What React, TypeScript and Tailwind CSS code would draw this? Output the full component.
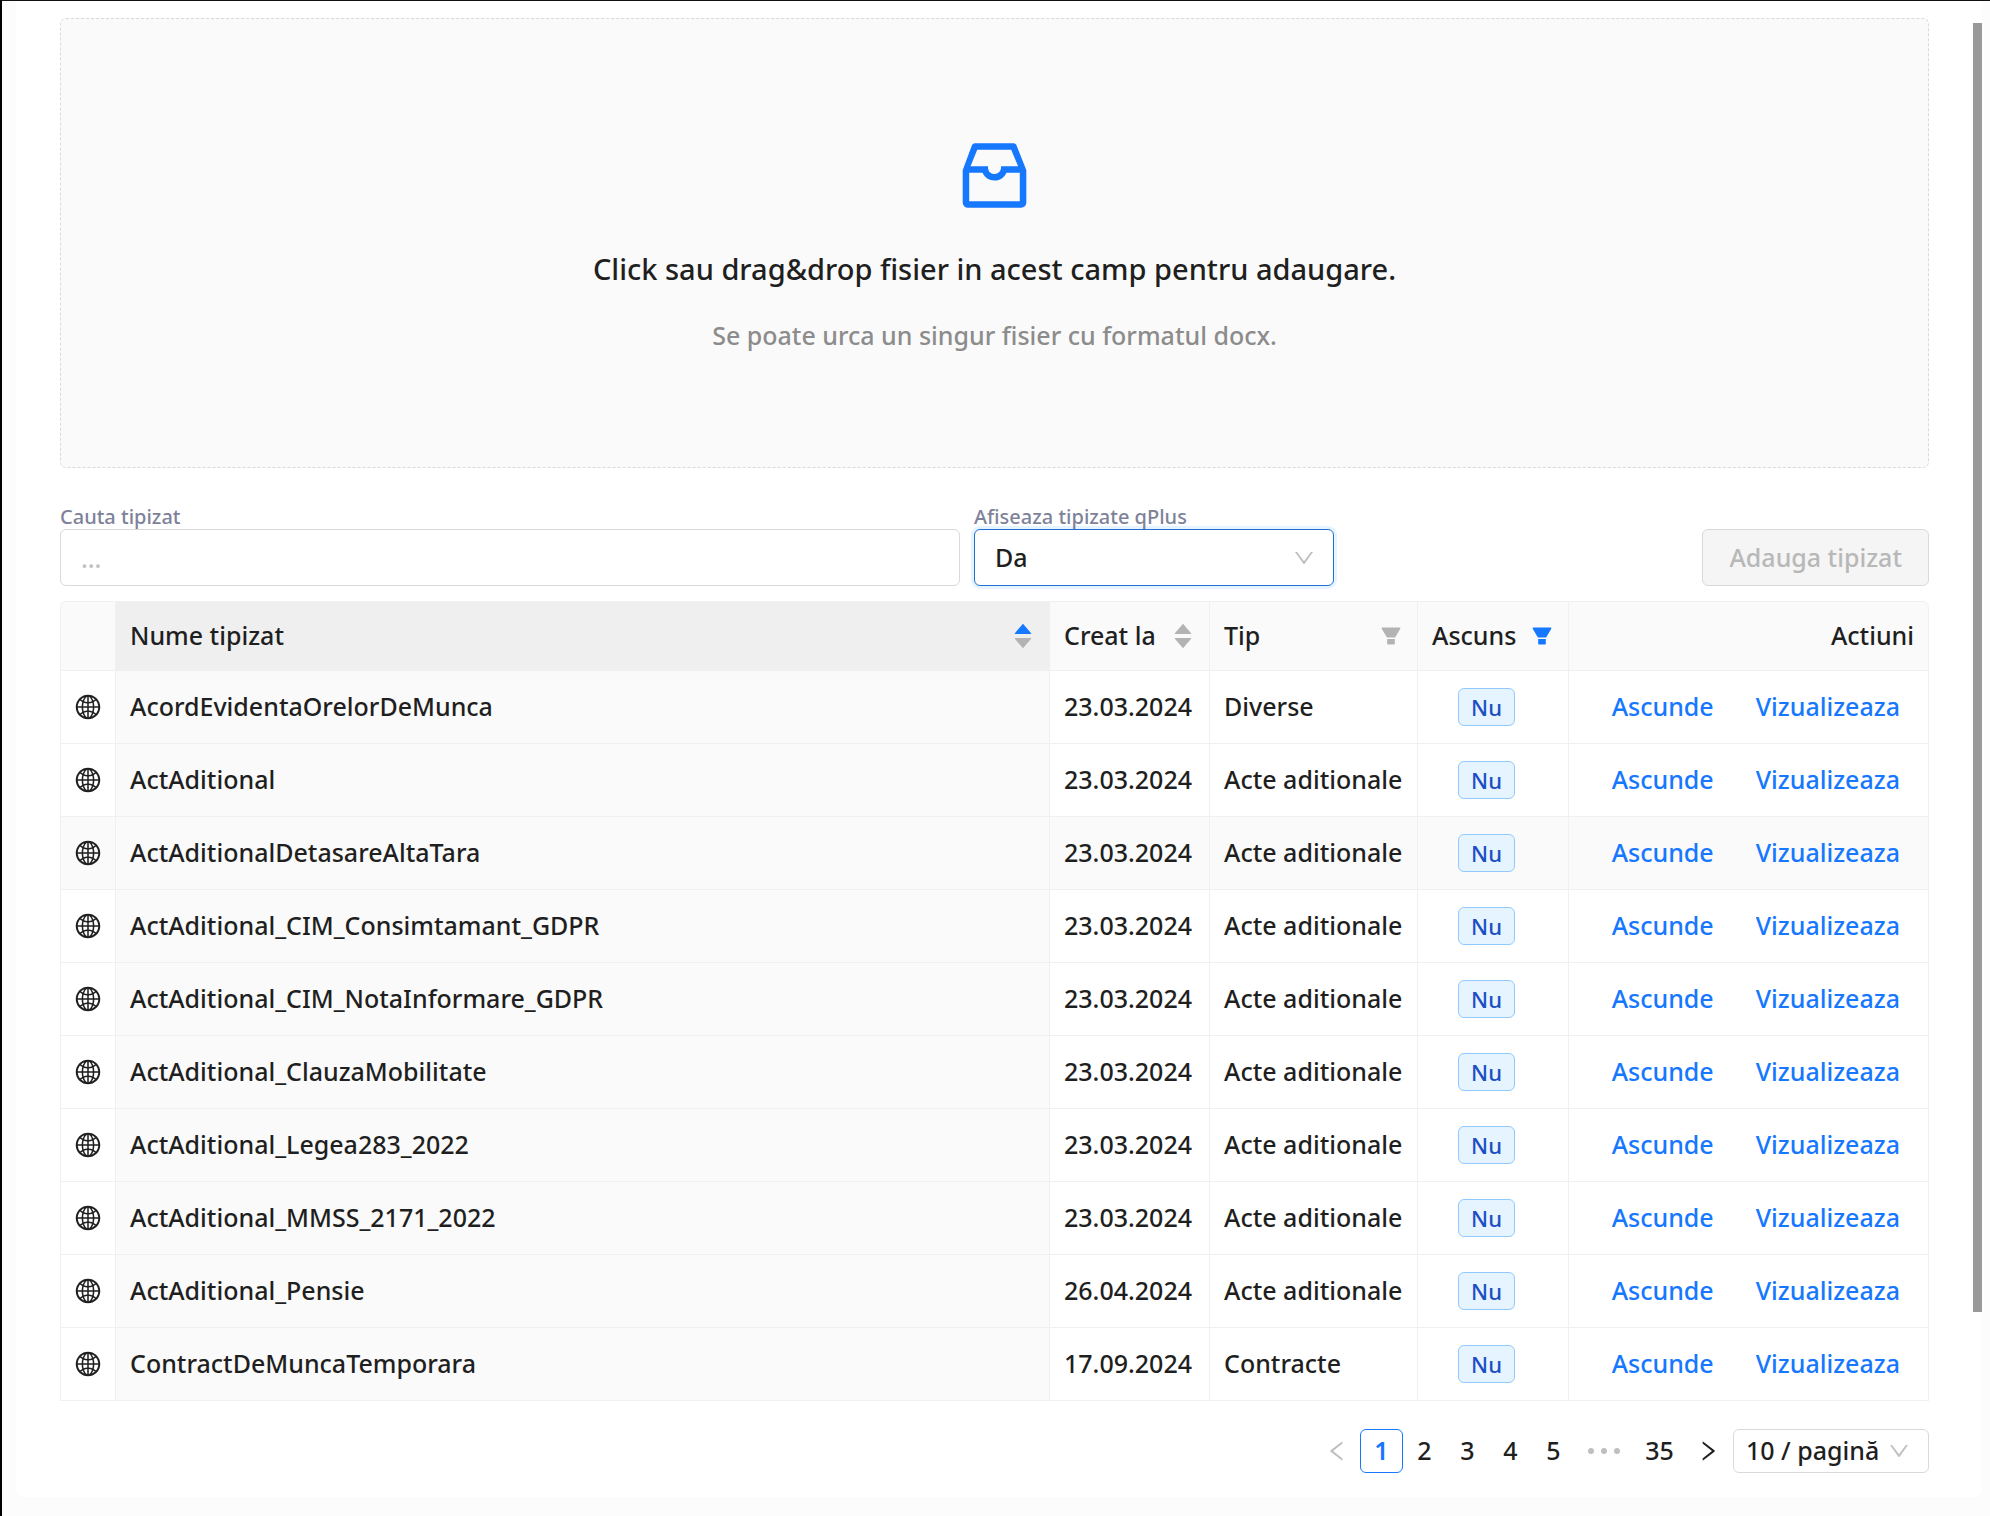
import { AiFillCaretDown, AiFillCaretUp, AiFillFilter, AiOutlineDown, AiOutlineGlobal, AiOutlineInbox, AiOutlineLeft, AiOutlineRight } from 'react-icons/ai'

const rows = [
  { name: 'AcordEvidentaOrelorDeMunca', date: '23.03.2024', type: 'Diverse' },
  { name: 'ActAditional', date: '23.03.2024', type: 'Acte aditionale' },
  { name: 'ActAditionalDetasareAltaTara', date: '23.03.2024', type: 'Acte aditionale', active: true },
  { name: 'ActAditional_CIM_Consimtamant_GDPR', date: '23.03.2024', type: 'Acte aditionale' },
  { name: 'ActAditional_CIM_NotaInformare_GDPR', date: '23.03.2024', type: 'Acte aditionale' },
  { name: 'ActAditional_ClauzaMobilitate', date: '23.03.2024', type: 'Acte aditionale' },
  { name: 'ActAditional_Legea283_2022', date: '23.03.2024', type: 'Acte aditionale' },
  { name: 'ActAditional_MMSS_2171_2022', date: '23.03.2024', type: 'Acte aditionale' },
  { name: 'ActAditional_Pensie', date: '26.04.2024', type: 'Acte aditionale' },
  { name: 'ContractDeMuncaTemporara', date: '17.09.2024', type: 'Contracte' },
]

const Sorter = ({ up }: { up?: boolean }) => (
  <span className="flex flex-col items-center">
    <AiFillCaretUp className={up ? 'size-6 text-[#1677ff]' : 'size-6 text-[#b3b3b3]'} />
    <AiFillCaretDown className="-mt-[10px] size-6 text-[#b3b3b3]" />
  </span>
)

const Upload = () => (
  <button type="button" className="flex h-[450px] w-full flex-col items-center justify-center rounded-md border border-dashed border-[#d9d9d9] bg-[#fafafa]">
    <AiOutlineInbox className="size-[87px] text-[#1677ff]" />
    <span className="mt-7 text-[29px] leading-[44px]">Click sau drag&amp;drop fisier in acest camp pentru adaugare.</span>
    <span className="mt-6 text-[25px] leading-[40px] text-[#8c8c8c]">Se poate urca un singur fisier cu formatul docx.</span>
  </button>
)

const Filters = () => (
  <div className="mt-9 flex items-end gap-[14px]">
    <div className="flex flex-1 flex-col">
      <label htmlFor="search" className="text-xl leading-[25px] text-[#7e8299]">Cauta tipizat</label>
      <input id="search" placeholder="..." className="h-[57px] rounded-md border border-[#d9d9d9] px-5 outline-none placeholder:text-[#bfbfbf]" />
    </div>
    <div className="flex w-[360px] flex-col">
      <label htmlFor="qplus" className="relative z-10 text-xl leading-[25px] text-[#7e8299]">Afiseaza tipizate qPlus</label>
      <div className="relative">
        <select id="qplus" className="h-[57px] w-full appearance-none rounded-md border border-[#1f6fd6] bg-white px-5 shadow-[0_0_0_3px_#e6f4ff] outline-none">
          <option>Da</option>
          <option>Nu</option>
        </select>
        <AiOutlineDown className="pointer-events-none absolute top-1/2 right-[18px] size-6 -translate-y-1/2 text-[#bfbfbf]" />
      </div>
    </div>
    <div className="flex w-[581px] justify-end">
      <button type="button" disabled className="h-[57px] rounded-md border border-[#d9d9d9] bg-[#f5f5f5] px-[26px] text-[#b8b8b8]">Adauga tipizat</button>
    </div>
  </div>
)

const Th = 'h-[69px] border-r border-b border-[#f0f0f0] px-[14px] text-left font-medium'
const Td = 'h-[73px] border-r border-b border-[#f0f0f0] px-[14px]'

const Templates = () => (
  <table className="mt-[15px] w-full table-fixed border-separate border-spacing-0 rounded-t-md border-t border-l border-[#f0f0f0] whitespace-nowrap">
    <colgroup>
      <col className="w-[55px]" />
      <col />
      <col className="w-[160px]" />
      <col className="w-[208px]" />
      <col className="w-[151px]" />
      <col className="w-[360px]" />
    </colgroup>
    <thead className="bg-[#fafafa]">
      <tr>
        <th className={Th + ' rounded-tl-md'} aria-label="Vizibilitate"></th>
        <th className={Th + ' bg-[#efefef]'}>
          <span className="flex items-center justify-between">Nume tipizat <Sorter up /></span>
        </th>
        <th className={Th}>
          <span className="flex items-center justify-between">Creat la <Sorter /></span>
        </th>
        <th className={Th}>
          <span className="flex items-center justify-between">Tip <AiFillFilter className="size-6 text-[#b3b3b3]" /></span>
        </th>
        <th className={Th}>
          <span className="flex items-center justify-between">Ascuns <AiFillFilter className="size-6 text-[#1677ff]" /></span>
        </th>
        <th className={Th + ' rounded-tr-md'}>
          <span className="block text-right">Actiuni</span>
        </th>
      </tr>
    </thead>
    <tbody>
      {rows.map((row) => (
        <tr key={row.name} className={row.active ? 'bg-[#fafafa]' : ''}>
          <td className={Td}>
            <span className="flex justify-center">
              <AiOutlineGlobal className="size-7 shrink-0" />
            </span>
          </td>
          <td className={Td + ' bg-[#fafafa]'}>{row.name}</td>
          <td className={Td}>{row.date}</td>
          <td className={Td}>{row.type}</td>
          <td className={Td}>
            <span className="ml-[26px] block h-[38px] w-[57px] rounded-md border border-[#91caff] bg-[#e6f4ff] text-center text-[22px] leading-9 text-[#1d4fc4]">Nu</span>
          </td>
          <td className={Td}>
            <div className="flex justify-end gap-[42px] pr-[14px] text-[#1677ff]">
              <a href="#ascunde">Ascunde</a>
              <a href="#vizualizeaza">Vizualizeaza</a>
            </div>
          </td>
        </tr>
      ))}
    </tbody>
  </table>
)

const Pagination = () => (
  <nav className="mt-7 flex h-11 items-center justify-end">
    <button type="button" disabled aria-label="Inapoi" className="flex h-11 w-[46px] items-center justify-center text-[#bfbfbf]">
      <AiOutlineLeft className="size-[26px]" />
    </button>
    <button type="button" className="h-11 w-[43px] rounded-md border border-[#1677ff] font-semibold text-[#1677ff]">1</button>
    <button type="button" className="h-11 w-[43px]">2</button>
    <button type="button" className="h-11 w-[43px]">3</button>
    <button type="button" className="h-11 w-[43px]">4</button>
    <button type="button" className="h-11 w-[43px]">5</button>
    <span className="flex w-[58px] items-center justify-center gap-[7px]">
      <i className="size-[6px] rounded-full bg-[#bfbfbf]" />
      <i className="size-[6px] rounded-full bg-[#bfbfbf]" />
      <i className="size-[6px] rounded-full bg-[#bfbfbf]" />
    </span>
    <button type="button" className="h-11 w-[53px]">35</button>
    <button type="button" aria-label="Inainte" className="flex h-11 w-[43px] items-center justify-center">
      <AiOutlineRight className="size-[26px]" />
    </button>
    <div className="relative ml-1">
      <select aria-label="Randuri pe pagina" className="h-11 w-[196px] appearance-none rounded-md border border-[#d9d9d9] bg-white px-3 outline-none">
        <option>10 / pagină</option>
        <option>20 / pagină</option>
      </select>
      <AiOutlineDown className="pointer-events-none absolute top-1/2 right-[18px] size-6 -translate-y-1/2 text-[#bfbfbf]" />
    </div>
  </nav>
)

const App = () => {
  return (
    <div className="relative min-h-screen border-t border-l-2 border-t-[#111] border-l-black bg-[#fcfcfc] pr-2 pl-[14px] font-['Noto_Sans','Open_Sans',sans-serif] text-[25px] font-medium text-[#1f1f1f]">
      <main className="rounded-b-lg bg-white pt-[17px] pr-[53px] pb-6 pl-11">
        <Upload />
        <Filters />
        <Templates />
        <Pagination />
      </main>
      {/* scrollbar thumb */}
      <div className="absolute top-[22px] right-2 h-[1289px] w-[9px] bg-[#999]" />
    </div>
  )
}

export default App
